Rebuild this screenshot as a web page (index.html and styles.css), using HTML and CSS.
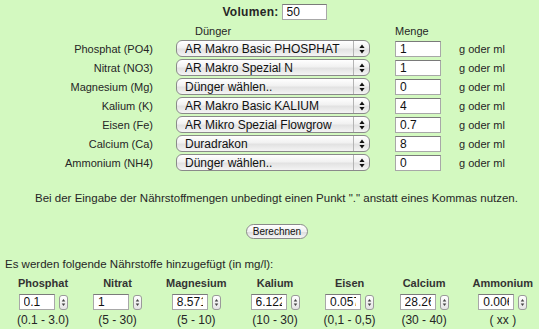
FILE: index.html
```html
<!doctype html>
<html lang="de">
	<head>
		<meta charset="UTF-8" />
		<meta name="viewport" content="width=device-width, initial-scale=1.0" />
		<title>Nährstoffrechner</title>
		<link rel="stylesheet" href="styles.css">
	</head>

	<body>
		<div class="volume">
			<label for="volumen">Volumen:</label>
			<input type="text" class="field" id="volumen" value="50" />
		</div>

		<div class="dose">
			<span></span>
			<span class="col-head fert-head">Dünger</span>
			<span class="col-head">Menge</span>
			<span></span>

			<label class="nutrient">Phosphat (PO4)</label>
			<div class="picker"><select><option>AR Makro Basic PHOSPHAT</option></select><span class="arrows"><svg width="6" height="10" viewBox="0 0 6 10"><path d="M3 0.5L5.6 4H0.4z M3 9.5L5.6 6H0.4z" fill="#111"/></svg></span></div>
			<input type="text" class="field amount" value="1" />
			<span class="unit">g oder ml</span>

			<label class="nutrient">Nitrat (NO3)</label>
			<div class="picker"><select><option>AR Makro Spezial N</option></select><span class="arrows"><svg width="6" height="10" viewBox="0 0 6 10"><path d="M3 0.5L5.6 4H0.4z M3 9.5L5.6 6H0.4z" fill="#111"/></svg></span></div>
			<input type="text" class="field amount" value="1" />
			<span class="unit">g oder ml</span>

			<label class="nutrient">Magnesium (Mg)</label>
			<div class="picker"><select><option>Dünger wählen..</option></select><span class="arrows"><svg width="6" height="10" viewBox="0 0 6 10"><path d="M3 0.5L5.6 4H0.4z M3 9.5L5.6 6H0.4z" fill="#111"/></svg></span></div>
			<input type="text" class="field amount" value="0" />
			<span class="unit">g oder ml</span>

			<label class="nutrient">Kalium (K)</label>
			<div class="picker"><select><option>AR Makro Basic KALIUM</option></select><span class="arrows"><svg width="6" height="10" viewBox="0 0 6 10"><path d="M3 0.5L5.6 4H0.4z M3 9.5L5.6 6H0.4z" fill="#111"/></svg></span></div>
			<input type="text" class="field amount" value="4" />
			<span class="unit">g oder ml</span>

			<label class="nutrient">Eisen (Fe)</label>
			<div class="picker"><select><option>AR Mikro Spezial Flowgrow</option></select><span class="arrows"><svg width="6" height="10" viewBox="0 0 6 10"><path d="M3 0.5L5.6 4H0.4z M3 9.5L5.6 6H0.4z" fill="#111"/></svg></span></div>
			<input type="text" class="field amount" value="0.7" />
			<span class="unit">g oder ml</span>

			<label class="nutrient">Calcium (Ca)</label>
			<div class="picker"><select><option>Duradrakon</option></select><span class="arrows"><svg width="6" height="10" viewBox="0 0 6 10"><path d="M3 0.5L5.6 4H0.4z M3 9.5L5.6 6H0.4z" fill="#111"/></svg></span></div>
			<input type="text" class="field amount" value="8" />
			<span class="unit">g oder ml</span>

			<label class="nutrient">Ammonium (NH4)</label>
			<div class="picker"><select><option>Dünger wählen..</option></select><span class="arrows"><svg width="6" height="10" viewBox="0 0 6 10"><path d="M3 0.5L5.6 4H0.4z M3 9.5L5.6 6H0.4z" fill="#111"/></svg></span></div>
			<input type="text" class="field amount" value="0" />
			<span class="unit">g oder ml</span>
		</div>

		<p class="note">Bei der Eingabe der Nährstoffmengen unbedingt einen Punkt "." anstatt eines Kommas nutzen.</p>

		<div class="actions">
			<button type="button">Berechnen</button>
		</div>

		<p class="summary">Es werden folgende Nährstoffe hinzugefügt (in mg/l):</p>

		<div class="results">
			<div class="result">
				<b>Phosphat</b>
				<div class="spin"><input type="text" class="field" value="0.1" /><span class="stepper"><svg width="5" height="9" viewBox="0 0 5 9"><path d="M2.5 1L4.3 3.4H0.7z M2.5 8L4.3 5.6H0.7z" fill="#444"/></svg></span></div>
				<span class="range">(0.1 - 3.0)</span>
			</div>
			<div class="result">
				<b>Nitrat</b>
				<div class="spin"><input type="text" class="field" value="1" /><span class="stepper"><svg width="5" height="9" viewBox="0 0 5 9"><path d="M2.5 1L4.3 3.4H0.7z M2.5 8L4.3 5.6H0.7z" fill="#444"/></svg></span></div>
				<span class="range">(5 - 30)</span>
			</div>
			<div class="result">
				<b>Magnesium</b>
				<div class="spin"><input type="text" class="field" value="8.5714" /><span class="stepper"><svg width="5" height="9" viewBox="0 0 5 9"><path d="M2.5 1L4.3 3.4H0.7z M2.5 8L4.3 5.6H0.7z" fill="#444"/></svg></span></div>
				<span class="range">(5 - 10)</span>
			</div>
			<div class="result">
				<b>Kalium</b>
				<div class="spin"><input type="text" class="field" value="6.1224" /><span class="stepper"><svg width="5" height="9" viewBox="0 0 5 9"><path d="M2.5 1L4.3 3.4H0.7z M2.5 8L4.3 5.6H0.7z" fill="#444"/></svg></span></div>
				<span class="range">(10 - 30)</span>
			</div>
			<div class="result">
				<b>Eisen</b>
				<div class="spin"><input type="text" class="field" value="0.0571" /><span class="stepper"><svg width="5" height="9" viewBox="0 0 5 9"><path d="M2.5 1L4.3 3.4H0.7z M2.5 8L4.3 5.6H0.7z" fill="#444"/></svg></span></div>
				<span class="range">(0,1 - 0,5)</span>
			</div>
			<div class="result">
				<b>Calcium</b>
				<div class="spin"><input type="text" class="field" value="28.2653" /><span class="stepper"><svg width="5" height="9" viewBox="0 0 5 9"><path d="M2.5 1L4.3 3.4H0.7z M2.5 8L4.3 5.6H0.7z" fill="#444"/></svg></span></div>
				<span class="range">(30 - 40)</span>
			</div>
			<div class="result">
				<b>Ammonium</b>
				<div class="spin"><input type="text" class="field" value="0.0061" /><span class="stepper"><svg width="5" height="9" viewBox="0 0 5 9"><path d="M2.5 1L4.3 3.4H0.7z M2.5 8L4.3 5.6H0.7z" fill="#444"/></svg></span></div>
				<span class="range">( xx )</span>
			</div>
		</div>
	</body>
</html>
```

FILE: styles.css
```css
body {
	margin: 0;
	font-family: "Liberation Sans", Arial, sans-serif;
	font-size: 11px;
	color: #262626;
	background-color: #d3f9c0;
}

.field {
	box-sizing: border-box;
	height: 16px;
	padding: 0 4px;
	font-family: "Liberation Sans", Arial, sans-serif;
	font-size: 12px;
	color: #111;
	background: #fff;
	border: 1px solid #a8a8a8;
	border-top-color: #7a7a7a;
	border-radius: 0;
	outline: none;
}

.volume {
	display: flex;
	justify-content: center;
	align-items: center;
	gap: 3px;
	padding: 4px 0 0 10px;
}

.volume label {
	font-size: 12px;
	font-weight: bold;
	letter-spacing: 0.3px;
}

.volume .field {
	width: 45px;
}

.dose {
	display: grid;
	grid-template-columns: 116px 219px 64px auto;
	grid-template-rows: 17px;
	grid-auto-rows: 19px;
	align-items: center;
	margin: 2px 0 0 60px;
}

.col-head {
	padding-top: 1px;
}

.fert-head {
	padding-left: 19px;
}

.nutrient {
	text-align: right;
	padding-right: 23px;
}

.picker {
	position: relative;
	width: 194px;
	height: 17px;
}

.picker select {
	appearance: none;
	-webkit-appearance: none;
	box-sizing: border-box;
	width: 100%;
	height: 100%;
	margin: 0;
	padding: 0 0 0 8px;
	font-family: "Liberation Sans", Arial, sans-serif;
	font-size: 12px;
	color: #111;
	background: linear-gradient(#ffffff, #f1f1f1 45%, #e2e2e2 55%, #f4f4f4);
	border: 1px solid #8a8a8a;
	border-radius: 6px;
	outline: none;
}

.arrows {
	position: absolute;
	top: 1px;
	right: 1px;
	bottom: 1px;
	width: 15px;
	display: flex;
	align-items: center;
	justify-content: center;
	border-left: 1px solid #b4b4b4;
	pointer-events: none;
}

.amount {
	width: 46px;
}

.note {
	margin: 20px 0 0;
	padding-left: 14px;
	font-size: 11.5px;
	text-align: center;
	line-height: 13px;
}

.actions {
	display: flex;
	justify-content: center;
	margin-top: 19px;
	padding-left: 15px;
}

button {
	box-sizing: border-box;
	width: 62px;
	height: 15px;
	padding: 0;
	font-family: "Liberation Sans", Arial, sans-serif;
	font-size: 10px;
	color: #111;
	background: linear-gradient(#ffffff, #f0f0f0 50%, #dedede 55%, #f6f6f6);
	border: 1px solid #8a8a8a;
	border-radius: 8px;
	cursor: pointer;
}

.summary {
	margin: 19px 0 0 5px;
	font-size: 11.5px;
	line-height: 13px;
}

.results {
	display: grid;
	grid-template-columns: repeat(7, auto);
	justify-content: start;
	column-gap: 24px;
	margin: 6px 0 0 17px;
}

.result {
	display: flex;
	flex-direction: column;
	align-items: center;
}

.result b {
	line-height: 13px;
	color: #333;
}

.spin {
	display: flex;
	align-items: center;
	gap: 4px;
	margin-top: 4px;
}

.spin .field {
	width: 36px;
}

.stepper {
	box-sizing: border-box;
	width: 9px;
	height: 15px;
	display: flex;
	align-items: center;
	justify-content: center;
	background: linear-gradient(#ffffff, #e4e4e4);
	border: 1px solid #9a9a9a;
	border-radius: 3px;
}

.range {
	margin-top: 3px;
	font-size: 12px;
	line-height: 14px;
}
```
